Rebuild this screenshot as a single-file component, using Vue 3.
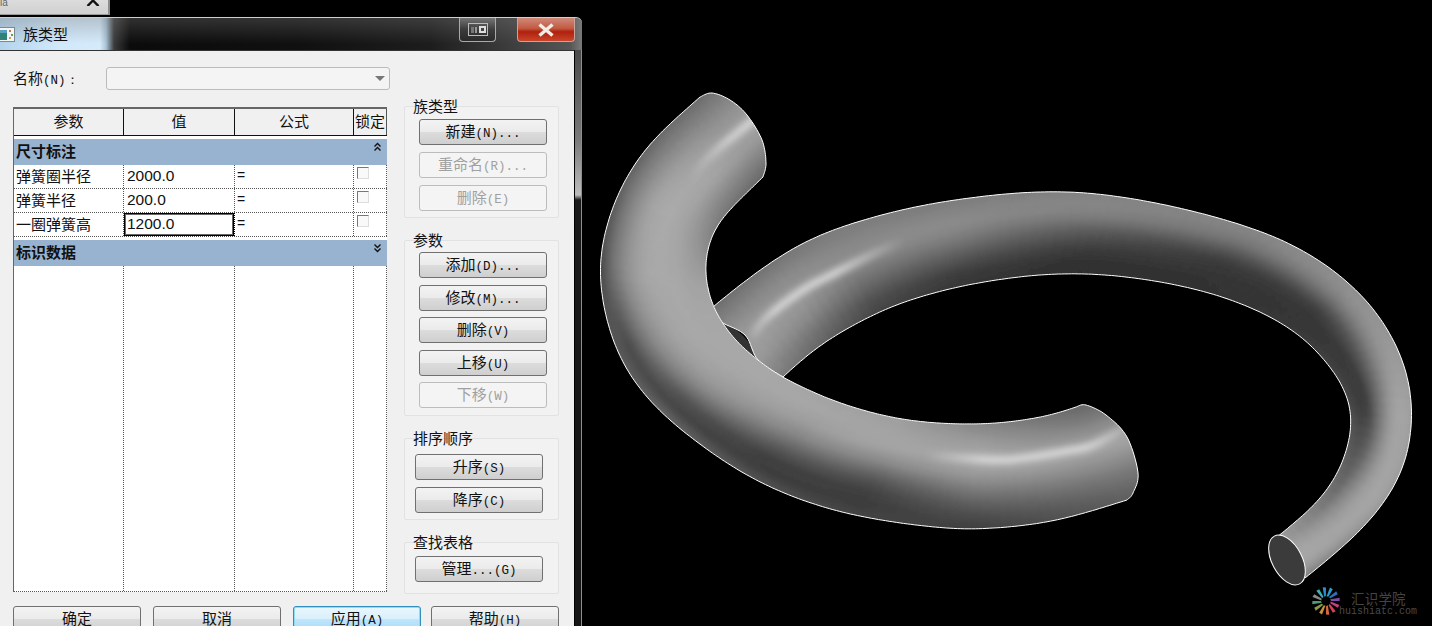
<script setup>
const T = [0, 0.12, 0.25, 0.35, 0.45, 0.55, 0.7, 0.85, 1]

function spline(pts) {
  const out = []
  const n = pts.length
  const get = (i) => pts[Math.max(0, Math.min(n - 1, i))]
  for (let i = 0; i < n - 1; i++) {
    const [p0, p1, p2, p3] = [get(i - 1), get(i), get(i + 1), get(i + 2)]
    for (let k = 0; k < 10; k++) {
      const u = k / 10
      const f = (a, b, c, d) =>
        0.5 * (2 * b + (c - a) * u + (2 * a - 5 * b + 4 * c - d) * u * u + (3 * b - a - 3 * c + d) * u * u * u)
      out.push([f(p0[0], p1[0], p2[0], p3[0]), f(p0[1], p1[1], p2[1], p3[1])])
    }
  }
  out.push(pts[n - 1])
  return out
}

function resample(dense, count) {
  const len = [0]
  for (let i = 1; i < dense.length; i++) {
    len.push(len[i - 1] + Math.hypot(dense[i][0] - dense[i - 1][0], dense[i][1] - dense[i - 1][1]))
  }
  const total = len[len.length - 1]
  const res = []
  let j = 0
  for (let i = 0; i <= count; i++) {
    const d = (total * i) / count
    while (j < len.length - 2 && len[j + 1] < d) j++
    const u = (d - len[j]) / (len[j + 1] - len[j] || 1)
    res.push([dense[j][0] + (dense[j + 1][0] - dense[j][0]) * u, dense[j][1] + (dense[j + 1][1] - dense[j][1]) * u])
  }
  return res
}

function smoothRail(pts) {
  let rail = resample(spline(pts), 240)
  for (let pass = 0; pass < 3; pass++) {
    rail = rail.map((p, i) => {
      const w = Math.min(5, i, rail.length - 1 - i)
      let x = 0
      let y = 0
      for (let k = -w; k <= w; k++) {
        x += rail[i + k][0]
        y += rail[i + k][1]
      }
      return [x / (2 * w + 1), y / (2 * w + 1)]
    })
  }
  return rail
}

function extend(rail, extra) {
  const a = rail[0]
  const b = rail[1]
  const y = rail[rail.length - 1]
  const z = rail[rail.length - 2]
  const head = []
  const tail = []
  for (let k = extra; k >= 1; k--) head.push([a[0] + (a[0] - b[0]) * k, a[1] + (a[1] - b[1]) * k])
  for (let k = 1; k <= extra; k++) tail.push([y[0] + (y[0] - z[0]) * k, y[1] + (y[1] - z[1]) * k])
  return [...head, ...rail, ...tail]
}

function shade(keys, s, tRaw) {
  const cs = Math.max(0, Math.min(1, s))
  const t = Math.max(0, Math.min(1, tRaw))
  let i = 0
  while (i < keys.length - 2 && keys[i + 1][0] < cs) i++
  const u = (cs - keys[i][0]) / (keys[i + 1][0] - keys[i][0])
  let k = 0
  while (k < T.length - 2 && T[k + 1] < t) k++
  const v = (t - T[k]) / (T[k + 1] - T[k])
  const at = (row) => row[1][k] + (row[1][k + 1] - row[1][k]) * v
  return Math.round(at(keys[i]) + (at(keys[i + 1]) - at(keys[i])) * u)
}

function ribbon(outerRail, innerRail, keys) {
  const segs = 80
  const strips = 34
  const extra = 6
  const pick = (r) => {
    const res = []
    for (let i = 0; i <= segs; i++) res.push(r[Math.round((i * (r.length - 1)) / segs)])
    return res
  }
  const o = extend(pick(outerRail), extra)
  const n = extend(pick(innerRail), extra)
  const quads = []
  const mix = (a, b, t) => `${(a[0] + (b[0] - a[0]) * t).toFixed(1)} ${(a[1] + (b[1] - a[1]) * t).toFixed(1)}`
  for (let i = 0; i < o.length - 1; i++) {
    for (let j = 0; j < strips; j++) {
      const t0 = -0.15 + (1.3 * j) / strips
      const t1 = -0.15 + (1.3 * (j + 1)) / strips
      const g = shade(keys, (i + 0.5 - extra) / segs, (t0 + t1) / 2)
      quads.push({
        d: `M${mix(o[i], n[i], t0)}L${mix(o[i], n[i], t1)}L${mix(o[i + 1], n[i + 1], t1)}L${mix(o[i + 1], n[i + 1], t0)}Z`,
        c: `rgb(${g},${g},${g})`
      })
    }
  }
  return quads
}

function toLine(list) {
  return 'M' + list.map((p) => `${p[0].toFixed(1)} ${p[1].toFixed(1)}`).join('L')
}

const toPath = (list) => toLine(list) + 'Z'

const frontOuter = smoothRail([[700, 97], [650, 143], [623, 183], [607, 223], [599, 270], [607, 323], [620, 358], [640, 390], [681, 430], [755, 480], [840, 512], [941, 528], [998, 528], [1059, 520], [1127, 500]])
const frontInner = smoothRail([[763, 177], [723, 217], [710, 240], [705, 270], [713, 307], [735, 340], [758, 360], [782, 377], [840, 403], [907, 420], [981, 424], [1042, 417], [1076, 407]])
const frontEnd = spline([[1127, 500], [1133, 493], [1138, 473], [1127, 437], [1106, 415], [1086, 405], [1076, 407]])
const frontTop = spline([[763, 177], [766, 163], [762, 140], [747, 115], [730, 100], [712, 93], [700, 97]])
const frontPath = toPath([...frontOuter, ...frontEnd, ...[...frontInner].reverse(), ...frontTop])
const frontKeys = [
  [0, [110, 125, 140, 150, 158, 165, 155, 130, 105]],
  [0.07, [105, 125, 145, 158, 165, 170, 165, 140, 115]],
  [0.14, [95, 125, 150, 165, 170, 172, 165, 150, 130]],
  [0.24, [70, 115, 145, 160, 168, 170, 170, 165, 165]],
  [0.33, [90, 75, 115, 140, 155, 165, 170, 170, 170]],
  [0.42, [105, 70, 85, 115, 140, 155, 165, 170, 170]],
  [0.55, [85, 62, 65, 85, 110, 135, 158, 168, 165]],
  [0.68, [70, 60, 65, 80, 105, 135, 165, 165, 160]],
  [0.82, [62, 75, 98, 118, 140, 160, 170, 155, 135]],
  [1, [95, 105, 120, 135, 150, 165, 150, 125, 105]]
]

const backOuter = smoothRail([[713, 307], [750, 277], [807, 240], [873, 217], [940, 202], [1027, 192], [1093, 193], [1167, 205], [1233, 222], [1290, 243], [1343, 277], [1383, 320], [1407, 370], [1413, 413], [1405, 467], [1377, 513], [1343, 547], [1305, 578]])
const backInner = smoothRail([[783, 377], [823, 343], [890, 307], [957, 287], [1010, 278], [1050, 274], [1110, 275], [1187, 287], [1250, 307], [1300, 335], [1333, 370], [1350, 400], [1352, 430], [1340, 470], [1317, 503], [1277, 537]])
const backCap = spline([[783, 377], [758, 360], [745, 335], [720, 321], [713, 307]])
const backPath = toPath([...backOuter, ...[...backInner].reverse(), ...backCap])
const backKeys = [
  [0, [110, 125, 140, 150, 158, 160, 155, 140, 125]],
  [0.07, [115, 130, 142, 150, 155, 152, 138, 115, 100]],
  [0.14, [125, 130, 138, 142, 138, 125, 105, 82, 70]],
  [0.25, [125, 132, 140, 136, 125, 110, 85, 62, 55]],
  [0.4, [130, 135, 130, 115, 95, 80, 60, 50, 48]],
  [0.55, [135, 130, 115, 95, 75, 60, 55, 52, 50]],
  [0.67, [145, 145, 130, 110, 85, 65, 55, 55, 58]],
  [0.8, [160, 165, 165, 155, 135, 110, 65, 62, 75]],
  [0.9, [155, 165, 168, 165, 160, 150, 130, 105, 110]],
  [1, [125, 150, 165, 170, 170, 170, 165, 160, 160]]
]

const frontQuads = ribbon(frontOuter, frontInner, frontKeys)
const backQuads = ribbon(backOuter, backInner, backKeys)

const shineBack = toLine(spline([[752, 336], [767, 317], [803, 290], [837, 272], [873, 254], [905, 240]]))
const shineTop = toLine(spline([[690, 178], [703, 163], [720, 147], [747, 125], [762, 113]]))
const shineRight = toLine(spline([[925, 456], [992, 460], [1025, 458], [1067, 451], [1093, 445], [1125, 428]]))

const rows = [
  { name: '弹簧圈半径', value: '2000.0' },
  { name: '弹簧半径', value: '200.0' },
  { name: '一圈弹簧高', value: '1200.0', active: true }
]

const groups = [
  {
    id: 'g1',
    title: '族类型',
    buttons: [
      { cn: '新建', key: '(N)...' },
      { cn: '重命名', key: '(R)...', off: true },
      { cn: '删除', key: '(E)', off: true }
    ]
  },
  {
    id: 'g2',
    title: '参数',
    buttons: [
      { cn: '添加', key: '(D)...' },
      { cn: '修改', key: '(M)...' },
      { cn: '删除', key: '(V)' },
      { cn: '上移', key: '(U)' },
      { cn: '下移', key: '(W)', off: true }
    ]
  },
  {
    id: 'g3',
    title: '排序顺序',
    buttons: [
      { cn: '升序', key: '(S)' },
      { cn: '降序', key: '(C)' }
    ]
  },
  {
    id: 'g4',
    title: '查找表格',
    buttons: [{ cn: '管理', key: '...(G)' }]
  }
]

const footer = [
  { cn: '确定', key: '' },
  { cn: '取消', key: '' },
  { cn: '应用', key: '(A)', primary: true },
  { cn: '帮助', key: '(H)' }
]

const petalColors = ['#2a9fc9', '#2f6fb5', '#7a4fa3', '#c2407f', '#d8405a', '#d9683a', '#c98f3a', '#8a9a4a', '#4a9a7a', '#8a8a8a', '#3ab0b0', '#2a8fd0']
const petals = petalColors.map((c, i) => ({ c, a: (i * 360) / petalColors.length }))
</script>

<template>
  <div class="screen">
    <div class="left">
      <div class="tab">
        <span class="tab-text">ia</span>
        <svg class="tab-x" width="14" height="7" viewBox="0 0 14 7">
          <path d="M1.5 7 L7 1.5 L12.5 7" fill="none" stroke="#111" stroke-width="2.4" />
        </svg>
      </div>

      <div class="dialog">
        <div class="title">
          <svg class="title-icon" width="16" height="15" viewBox="0 0 16 15">
            <rect x="0.5" y="0.5" width="15" height="14" fill="#f2f6f6" stroke="#7c8b92" />
            <rect x="1" y="3" width="7" height="10" fill="#2f8278" />
            <rect x="1" y="3" width="7" height="3" fill="#5b9fbc" />
            <rect x="10" y="3" width="2" height="2" fill="#c9783f" />
            <rect x="12" y="7" width="2" height="2" fill="#5fa35a" />
            <rect x="10" y="10" width="2" height="2" fill="#d1a23f" />
          </svg>
          <span class="title-text">族类型</span>
          <button class="win-btn win-min" type="button">
            <svg width="20" height="13" viewBox="0 0 20 13">
              <rect x="0.5" y="0.5" width="19" height="12" fill="none" stroke="#bbb" />
              <rect x="3" y="4" width="3" height="6" fill="#777" />
              <rect x="7" y="4" width="2" height="6" fill="#999" />
              <rect x="11" y="3" width="7" height="7" fill="#ddd" />
              <rect x="13" y="5" width="3" height="3" fill="#444" />
            </svg>
          </button>
          <button class="win-btn win-close" type="button">
            <svg width="18" height="14" viewBox="0 0 18 14">
              <path d="M2.5 1.5 L15.5 12.5 M15.5 1.5 L2.5 12.5" stroke="#f1ece6" stroke-width="3.4" fill="none" />
            </svg>
          </button>
        </div>

        <div class="body">
          <div class="client">
            <div class="name-row">
              <span class="name-label">名称<span class="lat">(N)：</span></span>
              <div class="combo"><i class="combo-arrow"></i></div>
            </div>

            <div class="main">
              <div class="table">
                <div class="cols head">
                  <div>参数</div>
                  <div>值</div>
                  <div>公式</div>
                  <div class="lock">锁定</div>
                </div>
                <div class="band first-band">
                  <span>尺寸标注</span>
                  <svg width="9" height="10" viewBox="0 0 9 10">
                    <path d="M1.5 4.5 L4.5 1.5 L7.5 4.5 M1.5 8.5 L4.5 5.5 L7.5 8.5" fill="none" stroke="#111" stroke-width="1.4" />
                  </svg>
                </div>
                <div v-for="row in rows" :key="row.name" class="cols row">
                  <div class="cell-name">{{ row.name }}</div>
                  <div class="cell-value" :class="{ active: row.active }">{{ row.value }}</div>
                  <div class="cell-formula">=</div>
                  <div class="cell-check"><i class="check"></i></div>
                </div>
                <div class="band second-band">
                  <span>标识数据</span>
                  <svg width="9" height="10" viewBox="0 0 9 10">
                    <path d="M1.5 1.5 L4.5 4.5 L7.5 1.5 M1.5 5.5 L4.5 8.5 L7.5 5.5" fill="none" stroke="#111" stroke-width="1.4" />
                  </svg>
                </div>
                <div class="cols filler">
                  <div></div>
                  <div></div>
                  <div></div>
                  <div></div>
                </div>
              </div>

              <div class="side">
                <section v-for="g in groups" :key="g.id" class="group" :class="g.id">
                  <div class="legend">{{ g.title }}</div>
                  <div class="stack">
                    <button v-for="b in g.buttons" :key="b.cn + b.key" class="btn" :class="{ off: b.off }" type="button">
                      {{ b.cn }}<span class="lat">{{ b.key }}</span>
                    </button>
                  </div>
                </section>
              </div>
            </div>

            <div class="footer">
              <button v-for="b in footer" :key="b.cn" class="btn" :class="{ primary: b.primary }" type="button">
                {{ b.cn }}<span class="lat">{{ b.key }}</span>
              </button>
            </div>
          </div>
          <div class="frame"></div>
        </div>
      </div>
    </div>

    <div class="canvas">
      <svg class="model" width="850" height="626" viewBox="582 0 850 626">
        <defs>
          <clipPath id="back-clip"><path :d="backPath" /></clipPath>
          <clipPath id="front-clip"><path :d="frontPath" /></clipPath>
          <filter id="soft" filterUnits="userSpaceOnUse" x="582" y="0" width="850" height="626">
            <feGaussianBlur stdDeviation="2" />
          </filter>
          <filter id="glow" filterUnits="userSpaceOnUse" x="582" y="0" width="850" height="626">
            <feGaussianBlur stdDeviation="3.5" />
          </filter>
          <linearGradient id="shine-back" gradientUnits="userSpaceOnUse" x1="752" y1="0" x2="905" y2="0">
            <stop offset="0" stop-color="#e8e8e8" stop-opacity="0.25" />
            <stop offset="0.15" stop-color="#e8e8e8" stop-opacity="0.85" />
            <stop offset="0.55" stop-color="#e8e8e8" stop-opacity="0.9" />
            <stop offset="1" stop-color="#e8e8e8" stop-opacity="0" />
          </linearGradient>
          <linearGradient id="shine-top" gradientUnits="userSpaceOnUse" x1="690" y1="0" x2="762" y2="0">
            <stop offset="0" stop-color="#e8e8e8" stop-opacity="0" />
            <stop offset="0.55" stop-color="#e8e8e8" stop-opacity="0.75" />
            <stop offset="1" stop-color="#e8e8e8" stop-opacity="0.9" />
          </linearGradient>
          <linearGradient id="shine-right" gradientUnits="userSpaceOnUse" x1="925" y1="0" x2="1125" y2="0">
            <stop offset="0" stop-color="#e8e8e8" stop-opacity="0" />
            <stop offset="0.3" stop-color="#e8e8e8" stop-opacity="0.85" />
            <stop offset="0.8" stop-color="#e8e8e8" stop-opacity="0.9" />
            <stop offset="1" stop-color="#e8e8e8" stop-opacity="0.3" />
          </linearGradient>
        </defs>

        <path d="M716 319 Q748 330 764 368 L720 345 Z" fill="#333" />
        <g clip-path="url(#back-clip)">
          <g filter="url(#soft)">
            <path v-for="(q, i) in backQuads" :key="i" :d="q.d" :fill="q.c" :stroke="q.c" stroke-width="0.8" />
          </g>
          <path :d="shineBack" fill="none" stroke="url(#shine-back)" stroke-width="7" filter="url(#glow)" />
        </g>
        <path :d="backPath" fill="none" stroke="#fff" stroke-width="1" />
        <ellipse cx="1287" cy="560" rx="15" ry="27" transform="rotate(-28 1287 560)" fill="#3b3b3b" stroke="#fff" stroke-width="1" />

        <path :d="frontPath" fill="#000" />
        <g clip-path="url(#front-clip)">
          <g filter="url(#soft)">
            <path v-for="(q, i) in frontQuads" :key="i" :d="q.d" :fill="q.c" :stroke="q.c" stroke-width="0.8" />
          </g>
          <path :d="shineTop" fill="none" stroke="url(#shine-top)" stroke-width="7" filter="url(#glow)" />
          <path :d="shineRight" fill="none" stroke="url(#shine-right)" stroke-width="7" filter="url(#glow)" />
        </g>
        <path :d="frontPath" fill="none" stroke="#fff" stroke-width="1" />
      </svg>

      <div class="mark">
        <svg class="mark-logo" width="28" height="28" viewBox="-14 -14 28 28">
          <g v-for="p in petals" :key="p.a" :transform="`rotate(${p.a})`">
            <path d="M0.5 -4.5 L4 -13.5 L6.8 -11.8 L2.5 -4.5 Z" :fill="p.c" />
          </g>
        </svg>
        <div class="mark-text">
          <div class="mark-cn">汇识学院</div>
          <div class="mark-en">huishiatc.com</div>
        </div>
      </div>
    </div>
  </div>
</template>

<style>
html,
body {
  margin: 0;
  background: #000;
}
</style>

<style scoped>
.screen {
  width: 1432px;
  height: 626px;
  background: #000;
  overflow: hidden;
  display: flex;
  font-family: "Noto Sans CJK SC", "Liberation Sans", sans-serif;
  font-size: 15px;
  color: #111;
}

.left {
  width: 582px;
  flex: none;
  display: flex;
  flex-direction: column;
}

.lat {
  font-family: "Liberation Mono", monospace;
  font-size: 12.5px;
}

.tab {
  width: 110px;
  height: 15px;
  flex: none;
  display: flex;
  justify-content: space-between;
  box-sizing: border-box;
  padding-right: 8px;
  background: linear-gradient(#dcdcdc, #d0d0d0);
  border-right: 2px solid #8c8c8c;
  border-bottom: 1px solid #9a9a9a;
  overflow: hidden;
}

.tab-text {
  font: 10px/6px "Liberation Sans", sans-serif;
  color: #666;
}

.tab-x {
  margin-top: -1px;
}

.dialog {
  margin-top: 2px;
  flex: 1;
  min-height: 0;
  display: flex;
  flex-direction: column;
}

.title {
  height: 33px;
  flex: none;
  box-sizing: border-box;
  display: flex;
  align-items: flex-start;
  border-top: 1px solid #cfcfcf;
  border-top-right-radius: 6px;
  background:
    linear-gradient(rgba(120, 120, 120, 0.35), rgba(0, 0, 0, 0) 26px),
    linear-gradient(90deg, #b4d4ec 0, #d2e9fb 60px, #d5ebfb 100px, #a9c3d6 106px, #3b3b3b 114px, #0b0b0b 130px, #101010 300px, #1d1d1d 430px, #555 570px, #777 581px);
  overflow: hidden;
}

.title-icon {
  margin-top: 9px;
  flex: none;
  margin-left: -1px;
}

.title-text {
  margin: 5px auto 0 8px;
  font-size: 15px;
  line-height: 22px;
  color: #111;
}

.win-btn {
  padding: 0;
  height: 24px;
  display: flex;
  align-items: center;
  justify-content: center;
  border-radius: 0 0 4px 4px;
  border-style: solid;
  border-width: 0 1px 1px;
  flex: none;
}

.win-min {
  width: 37px;
  margin-right: 21px;
  border-color: #a9a9a9;
  background: linear-gradient(rgba(170, 170, 170, 0.45), rgba(60, 60, 60, 0.7) 50%, rgba(40, 40, 40, 0.8));
}

.win-close {
  width: 58px;
  margin-right: 7px;
  border-color: #c9a49a;
  background: linear-gradient(#cf8a7a, #c25a42 45%, #b0200e 60%, #c8452a);
}

.body {
  flex: 1;
  min-height: 0;
  display: flex;
}

.client {
  width: 575px;
  flex: none;
  box-sizing: border-box;
  background: #f0f0f0;
  border-top: 1px solid #333;
  border-right: 1px solid #000;
  padding-top: 16px;
}

.frame {
  flex: 1;
  box-sizing: border-box;
  border-right: 1px solid #8e8e8e;
  background: linear-gradient(#4a4a4a 0, #7a7a7a 90px, #bdbdbd 145px, #1a1a1a 150px, #141414 100%);
}

.name-row {
  height: 23px;
  display: flex;
  align-items: center;
  padding-left: 13px;
}

.name-label {
  width: 93px;
  flex: none;
  white-space: nowrap;
  margin-top: -2px;
}

.combo {
  width: 284px;
  height: 23px;
  box-sizing: border-box;
  border: 1px solid #bbb;
  border-radius: 3px;
  background: #f4f4f4;
  display: flex;
  align-items: center;
  justify-content: flex-end;
  padding-right: 4px;
}

.combo-arrow {
  width: 0;
  height: 0;
  border-left: 5px solid transparent;
  border-right: 5px solid transparent;
  border-top: 5px solid #777;
}

.main {
  display: flex;
  align-items: flex-start;
  margin-top: 17px;
  padding-left: 13px;
}

.table {
  width: 374px;
  height: 485px;
  flex: none;
  box-sizing: border-box;
  display: flex;
  flex-direction: column;
  background: #fff;
  border-left: 1px solid #666;
}

.cols {
  display: grid;
  grid-template-columns: 110px 111px 119px 33px;
  flex: none;
}

.head {
  height: 29px;
  box-sizing: border-box;
  background: #f0f0f0;
  border-top: 2px solid #666;
  border-bottom: 1px solid #111;
}

.head > div {
  box-sizing: border-box;
  border-right: 1px solid #111;
  text-align: center;
  line-height: 24px;
}

.head > .lock {
  border-right: 1px solid #555;
  white-space: nowrap;
  overflow: hidden;
}

.band {
  height: 26px;
  flex: none;
  background: #98b3d0;
  display: flex;
  justify-content: space-between;
  font-weight: 700;
  line-height: 24px;
  padding: 0 5px 0 2px;
}

.band svg {
  margin-top: 3px;
}

.first-band {
  margin-top: 3px;
}

.second-band {
  margin-top: 3px;
}

.row {
  height: 24px;
  box-sizing: border-box;
  border-bottom: 1px dotted #555;
  background: #fff;
}

.row > div {
  box-sizing: border-box;
  border-right: 1px dotted #555;
  white-space: nowrap;
  line-height: 21px;
}

.cell-name {
  padding-left: 2px;
}

.cell-value {
  padding-left: 3px;
  font-family: "Liberation Sans", sans-serif;
  font-size: 15.5px;
}

.cell-value.active {
  box-shadow: inset 0 0 0 1px #000, inset 0 0 0 2px #666;
  border-right-color: #000;
}

.cell-formula {
  padding-left: 2px;
  font-family: "Liberation Sans", sans-serif;
  font-size: 14px;
}

.cell-check {
  padding: 2px 0 0 3px;
}

.check {
  display: block;
  width: 12px;
  height: 12px;
  box-sizing: border-box;
  background: #f9f9f9;
  border-top: 1px solid #777;
  border-left: 1px solid #777;
  border-right: 1px solid #ddd;
  border-bottom: 1px solid #ddd;
}

.filler {
  flex: 1;
  border-bottom: 1px dotted #555;
}

.filler > div {
  border-right: 1px dotted #555;
}

.side {
  width: 155px;
  flex: none;
  margin: -1px 0 0 17px;
  display: flex;
  flex-direction: column;
  gap: 22px;
}

.group {
  box-sizing: border-box;
  border: 1px solid #e2e2e2;
  border-radius: 2px;
  background: #f2f2f2;
}

.legend {
  height: 16px;
  margin: -9px 0 0 8px;
  line-height: 16px;
  white-space: nowrap;
}

.stack {
  display: flex;
  flex-direction: column;
}

.g1 {
  height: 112px;
}

.g1 .stack {
  margin: 5px 0 0 14px;
  gap: 7px;
}

.g2 {
  height: 176px;
}

.g2 .stack {
  margin: 4px 0 0 14px;
  gap: 6.6px;
}

.g3 {
  height: 82px;
}

.g3 .stack {
  margin: 8px 0 0 10px;
  gap: 7px;
}

.g4 {
  height: 52px;
}

.g4 .stack {
  margin: 6px 0 0 10px;
}

.btn {
  width: 128px;
  height: 26px;
  flex: none;
  padding: 0 0 2px;
  box-sizing: border-box;
  border: 1px solid #707070;
  border-radius: 3px;
  background: linear-gradient(#f3f3f3, #ebebeb 48%, #dcdcdc 52%, #cfcfcf);
  font-family: "Noto Sans CJK SC", "Liberation Sans", sans-serif;
  font-size: 15px;
  color: #111;
  line-height: 21px;
  white-space: nowrap;
}

.btn.off {
  background: #f4f4f4;
  border-color: #bcbcbc;
  color: #a0a0a0;
}

.btn.primary {
  border-color: #2f8fbd;
  box-shadow: inset 0 0 0 1px #8fdcf3;
  background: linear-gradient(#eaf6fd, #d9f0fc 48%, #bee6fd 52%, #a7d9f5);
}

.footer {
  display: flex;
  gap: 12px;
  margin-top: 12px;
  padding-left: 13px;
}

.footer .btn {
  padding-bottom: 4px;
}

.footer .btn:last-child {
  margin-left: -2px;
}

.canvas {
  position: relative;
  flex: 1;
  min-width: 0;
}

.model {
  display: block;
}

.mark {
  position: absolute;
  left: 730px;
  top: 587px;
  display: flex;
  color: #444;
}

.mark-logo {
  flex: none;
}

.mark-text {
  margin-left: -1px;
}

.mark-cn {
  margin: 3px 0 0 12px;
  font-size: 13.5px;
  line-height: 17px;
  letter-spacing: 0.2px;
  white-space: nowrap;
}

.mark-en {
  margin-top: -1px;
  font-family: "Liberation Mono", monospace;
  font-size: 10px;
  line-height: 12px;
  color: #4a4a4a;
}
</style>
